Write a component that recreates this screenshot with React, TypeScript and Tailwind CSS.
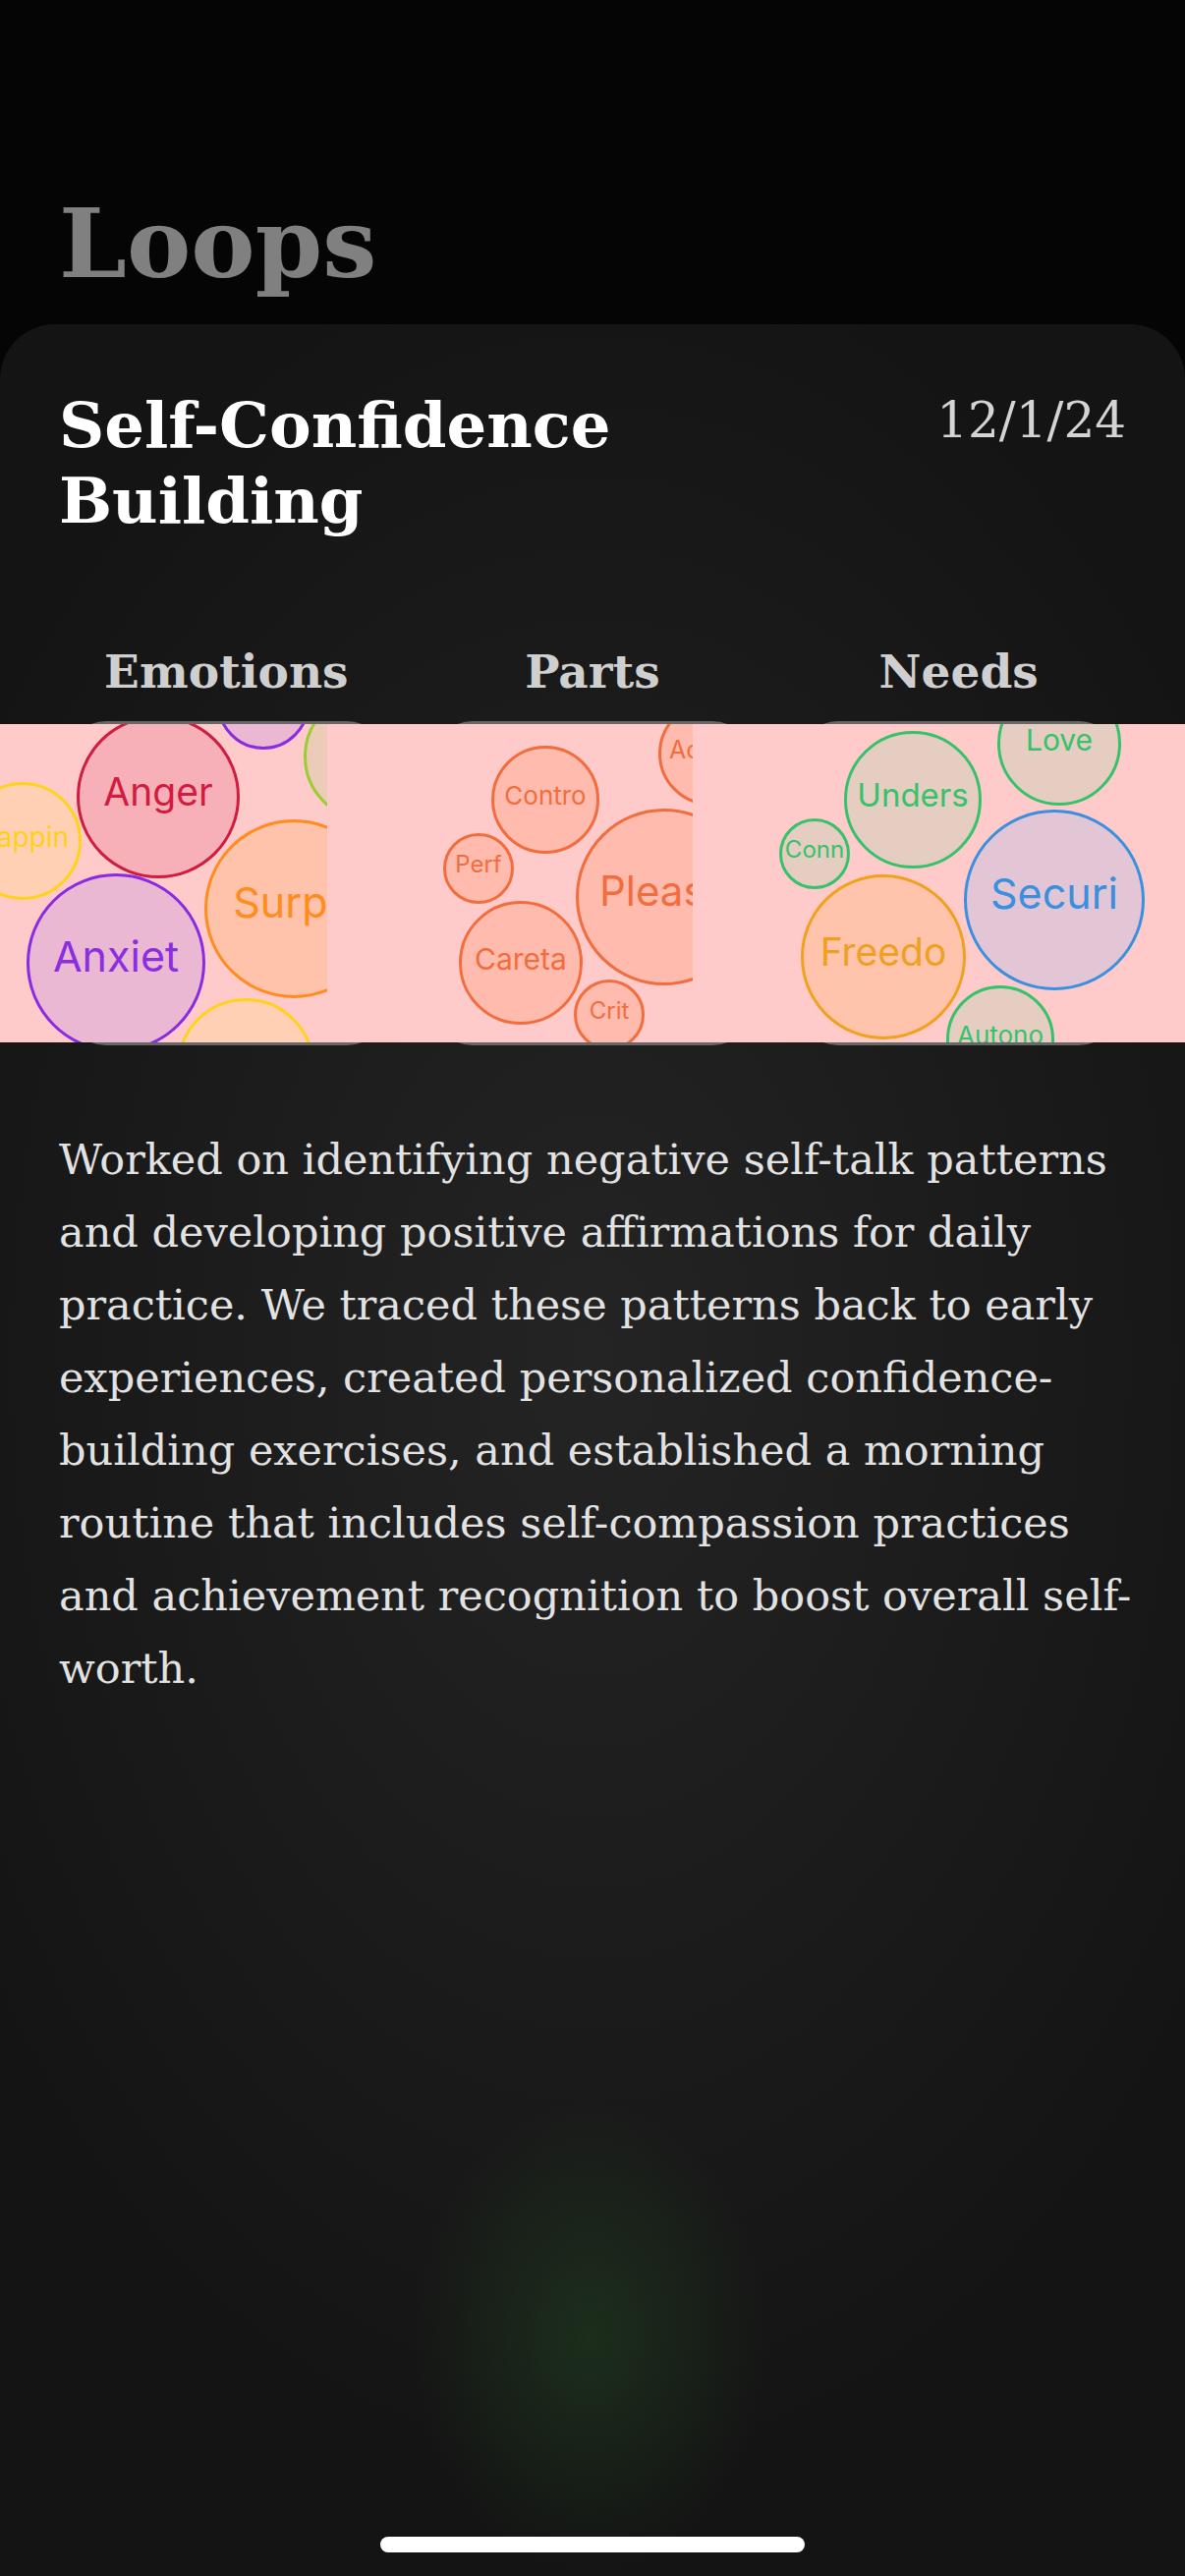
import React from 'react';

type Bubble = { x: number; y: number; r: number; label: string; cls: string };

const serif = "[font-family:'DejaVu_Serif',serif]";

// colour sets for the bubbles (stroke, fill, label)
const C = {
  crimson: 'border-[#d01c3e] bg-[#f7b0b8] text-[#d41a3f]',
  yellow: 'border-[#ffd31a] bg-[#ffd0b4] text-[#ffd01a]',
  purple: 'border-[#8a2be2] bg-[#ebb8d3] text-[#8a2ee0]',
  orange: 'border-[#ff8c1c] bg-[#ffc2ab] text-[#ff8c1c]',
  lime: 'border-[#9acd32] bg-[#eccbb8] text-[#9acd32]',
  steel: 'border-[#4a82b4] bg-[#e8c3cb] text-[#4a82b4]',
  coral: 'border-[#f26d3d] bg-[#ffbbad] text-[#f26d3d]',
  green: 'border-[#35c26b] bg-[#e5cdc1] text-[#35c26b]',
  amber: 'border-[#f0a21e] bg-[#ffc4ab] text-[#eea01e]',
  blue: 'border-[#3b8fdf] bg-[#e3c6d5] text-[#3b8fdf]',
};

const STRIP_TOP = 737;

const panels: { cls: string; offset: number; bubbles: Bubble[] }[] = [
  {
    cls: 'w-[333px]',
    offset: 0,
    bubbles: [
      { x: 268, y: 716, r: 47, label: 'Sadn', cls: C.purple },
      { x: 375, y: 770, r: 66, label: 'Excite', cls: C.lime },
      { x: 161, y: 811, r: 83, label: 'Anger', cls: C.crimson },
      { x: 23, y: 856, r: 60, label: 'Happin', cls: C.yellow },
      { x: 118, y: 980, r: 91, label: 'Anxiet', cls: C.purple },
      { x: 299, y: 925, r: 91, label: 'Surpri', cls: C.orange },
      { x: 250, y: 1086, r: 70, label: 'Joy', cls: C.yellow },
      { x: 372, y: 1090, r: 48, label: 'Calm', cls: C.steel },
    ],
  },
  {
    cls: 'w-[372px]',
    offset: 333,
    bubbles: [
      { x: 555, y: 814, r: 55, label: 'Contro', cls: C.coral },
      { x: 487, y: 884, r: 36, label: 'Perf', cls: C.coral },
      { x: 530, y: 980, r: 63, label: 'Careta', cls: C.coral },
      { x: 620, y: 1033, r: 36, label: 'Crit', cls: C.coral },
      { x: 676, y: 913, r: 90, label: 'Please', cls: C.coral },
      { x: 723, y: 767, r: 53, label: 'Accept', cls: C.coral },
    ],
  },
  {
    cls: 'flex-1',
    offset: 705,
    bubbles: [
      { x: 929, y: 814, r: 70, label: 'Unders', cls: C.green },
      { x: 1078, y: 757, r: 63, label: 'Love', cls: C.green },
      { x: 829, y: 869, r: 36, label: 'Conn', cls: C.green },
      { x: 899, y: 974, r: 84, label: 'Freedo', cls: C.amber },
      { x: 1073, y: 916, r: 92, label: 'Securi', cls: C.blue },
      { x: 1018, y: 1058, r: 55, label: 'Autono', cls: C.green },
    ],
  },
];

const tabs = ['Emotions', 'Parts', 'Needs'];

export default function App() {
  return (
    <div className={`flex min-h-[2622px] flex-col bg-[#050505] ${serif}`}>
      <h1 className="px-[60px] pt-[199px] text-[98px] leading-none font-bold text-[#808080]">Loops</h1>

      <main className="relative mt-[33px] flex flex-1 flex-col rounded-t-[56px] bg-[radial-gradient(ellipse_180px_240px_at_600px_2050px,rgba(38,85,38,0.38),transparent),radial-gradient(ellipse_760px_1150px_at_50%_46%,#242424,#141414)]">
        {/* título + fecha */}
        <div className="flex items-start justify-between px-[60px] pt-[64px]">
          <h2 className="max-w-[700px] text-[64px] leading-[77px] font-bold text-white">Self-Confidence Building</h2>
          <span className="mt-[4px] text-[50px] leading-[60px] text-[#d4d4d4]">12/1/24</span>
        </div>

        {/* columnas con sus gráficos */}
        <div className="relative mt-[106px]">
          <div className="grid grid-cols-3 px-[44px]">
            {tabs.map(t => (
              <div key={t} className="flex flex-col items-center px-6">
                <span className="text-[47px] leading-[60px] font-bold text-[#cfcfcf]">{t}</span>
                <div className="mt-[20px] h-[330px] w-full rounded-[40px] bg-[#676767]" />
              </div>
            ))}
          </div>

          <div className="absolute inset-x-0 bottom-[3px] flex h-[324px] bg-[#ffcaca] [font-family:Inter,sans-serif]">
            {panels.map((p, i) => (
              <div key={i} className={`relative h-full overflow-hidden ${p.cls}`}>
                {p.bubbles.map(b => (
                  <div
                    key={b.label}
                    className={`absolute flex items-center justify-center rounded-full border-[3px] ${b.cls}`}
                    style={{
                      left: b.x - p.offset - b.r,
                      top: b.y - STRIP_TOP - b.r,
                      width: b.r * 2,
                      height: b.r * 2,
                      fontSize: Math.max(24, Math.round(b.r * 0.47)),
                    }}
                  >
                    <span className="whitespace-nowrap pb-[0.3em] leading-none">{b.label}</span>
                  </div>
                ))}
              </div>
            ))}
          </div>
        </div>

        <p className="mt-[79px] pl-[60px] pr-[44px] text-[43px] leading-[74px] text-[#e2e2e2]">
          Worked on identifying negative self-talk patterns and developing positive affirmations for daily practice. We
          traced these patterns back to early experiences, created personalized confidence-building exercises, and
          established a morning routine that includes self-compassion practices and achievement recognition to boost
          overall self-worth.
        </p>

        <div className="mt-auto flex justify-center pb-[24px]">
          <div className="h-[16px] w-[432px] rounded-full bg-white" />
        </div>
      </main>
    </div>
  );
}
